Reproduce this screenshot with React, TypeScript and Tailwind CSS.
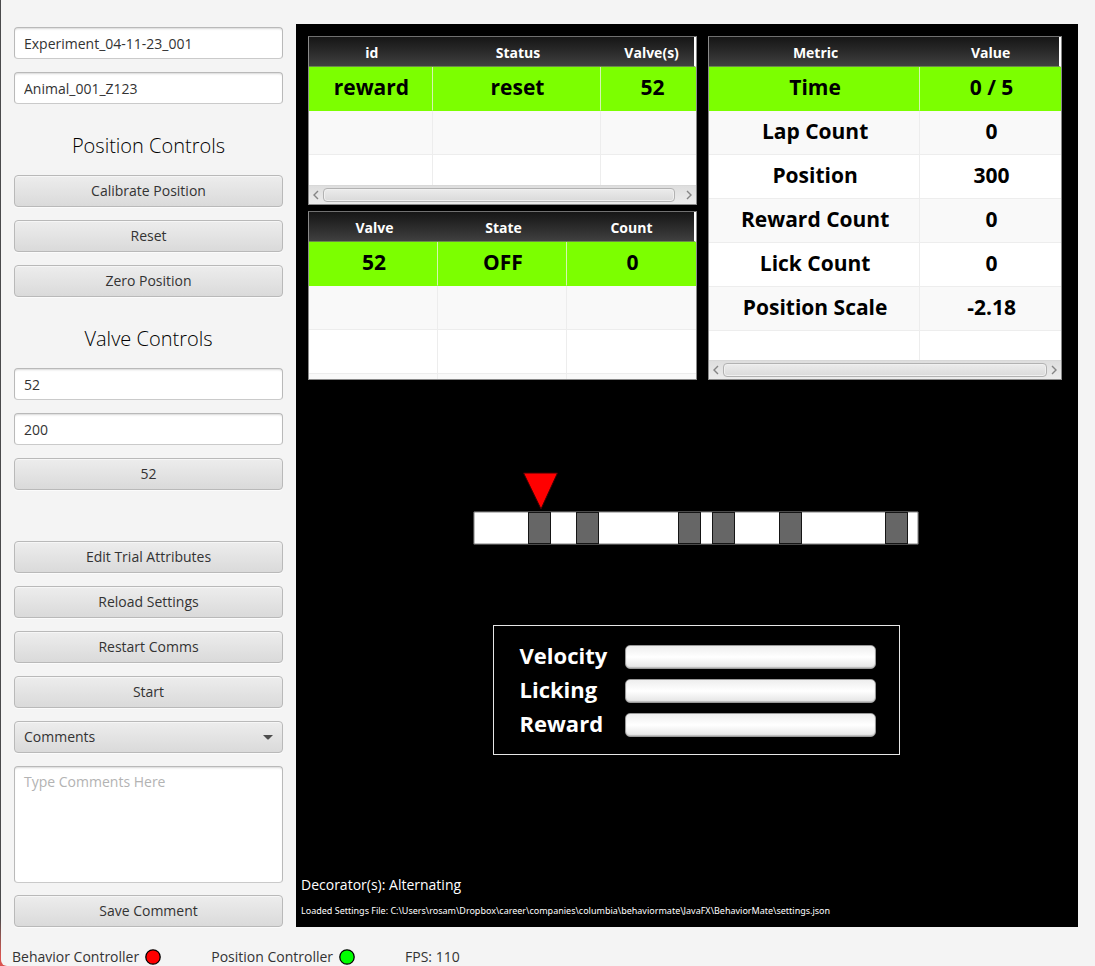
import { useState } from "react";
import type { ReactNode } from "react";

const CONTROL =
  "h-8 w-full shrink-0 rounded border border-[#b9b9b9] text-[14px] leading-5 text-[#333333]";
const BUTTON = `${CONTROL} flex items-center justify-center bg-linear-to-b from-[#ededed] to-[#dadada] pb-px shadow-[inset_0_1px_0_#f6f6f6,0_1px_0_#fbfbfb]`;
const FIELD = `${CONTROL} border-b-[#cacaca] bg-white px-[9px] shadow-[inset_0_2px_2px_-1px_#d8d8d8]`;

function PanelButton({ children }: { children: ReactNode }) {
  return (
    <button type="button" className={BUTTON}>
      {children}
    </button>
  );
}

function TextField({ label, initial }: { label: string; initial: string }) {
  const [value, setValue] = useState(initial);
  return (
    <input
      type="text"
      aria-label={label}
      value={value}
      onChange={(event) => setValue(event.target.value)}
      className={FIELD}
    />
  );
}

function SectionTitle({ children }: { children: ReactNode }) {
  return (
    <h2 className="flex h-[45px] items-end justify-center pb-0.5 text-[20px] leading-7 font-light text-black">
      {children}
    </h2>
  );
}

function ScrollBar({ thumb }: { thumb: string }) {
  return (
    <div className="flex h-[19px] shrink-0 items-center border-t border-[#d8d8d8] bg-linear-to-b from-[#dedede] to-[#ececec] pb-px">
      <button type="button" aria-label="Scroll left" className="flex w-3.5 shrink-0 justify-center">
        <svg width="6" height="10" viewBox="0 0 6 10" fill="none" stroke="#858585" strokeWidth="1.4">
          <path d="M5 1 1 5l4 4" />
        </svg>
      </button>
      <div className="flex-1">
        <div
          className={`h-3.5 rounded border border-[#b2b2b2] bg-linear-to-b from-[#ececec] to-[#dadada] shadow-[inset_0_0_0_1px_#f0f0f0] ${thumb}`}
        />
      </div>
      <button type="button" aria-label="Scroll right" className="flex w-3.5 shrink-0 justify-center">
        <svg width="6" height="10" viewBox="0 0 6 10" fill="none" stroke="#858585" strokeWidth="1.4">
          <path d="m1 1 4 4-4 4" />
        </svg>
      </button>
    </div>
  );
}

interface Column {
  title: string;
  width: string;
  pad: string;
}

interface DataTableProps {
  label: string;
  columns: Column[];
  rows: string[][];
  height: string;
  thumb?: string;
}

function DataTable({ label, columns, rows, height, thumb }: DataTableProps) {
  return (
    <div className={`flex flex-col overflow-hidden border border-[#8a8a8a] border-t-[#707070] bg-white ${height}`}>
      <div className="min-h-0 flex-1 overflow-hidden">
        <table aria-label={label} className="w-full table-fixed border-separate border-spacing-0 text-center">
          <colgroup>
            {columns.map((column) => (
              <col key={column.title} className={column.width} />
            ))}
          </colgroup>
          <thead>
            <tr>
              {columns.map((column) => (
                <th
                  key={column.title}
                  scope="col"
                  className={`h-[30px] border-b border-[#6a8a4a] bg-linear-to-b from-[#161616] to-[#404040] pt-0.5 pr-0 pb-0 text-[14px] leading-5 font-bold text-white last:border-r-2 last:border-r-white ${column.pad}`}
                >
                  {column.title}
                </th>
              ))}
            </tr>
          </thead>
          <tbody>
            {rows.map((cells, row) => (
              <tr key={row} className="bg-white first:bg-[#7cff00] even:bg-[#f9f9f9]">
                {cells.map((cell, index) => (
                  <td
                    key={index}
                    className={`h-11 border-r border-b pt-0 pr-0 pb-1 text-[21px] leading-8 font-bold text-black last:border-r-0 ${columns[index].pad} ${
                      row === 0 ? "border-r-[#d5f5b0] border-b-[#7cff00]" : "border-[#ededed]"
                    }`}
                  >
                    {cell}
                  </td>
                ))}
              </tr>
            ))}
          </tbody>
        </table>
      </div>
      {thumb && <ScrollBar thumb={thumb} />}
    </div>
  );
}

const CUES = [55.5, 103.5, 205.5, 239.5, 306.5, 412.5];

function Track() {
  return (
    <svg width="446" height="73" viewBox="0 0 446 73" role="img" aria-label="Position on track">
      <rect x="0.5" y="39.5" width="445" height="33" rx="1.5" fill="#fff" stroke="#4a4a4a" />
      <rect x="1.5" y="40.5" width="443" height="31" fill="none" stroke="#000" strokeOpacity="0.25" />
      {CUES.map((x) => (
        <rect key={x} x={x} y="40.5" width="22" height="31" fill="#666" stroke="#151515" />
      ))}
      <path d="M50.5 1h34L68 37z" fill="#f00" stroke="#3a0000" />
    </svg>
  );
}

function Gauge({ name }: { name: string }) {
  const id = `gauge-${name.toLowerCase()}`;
  return (
    <div className="flex h-6 items-center">
      <label htmlFor={id} className="w-[105px] pb-1 text-[22px] leading-6 font-bold text-white">
        {name}
      </label>
      <progress
        id={id}
        max={100}
        value={0}
        className="h-6 w-[251px] appearance-none rounded-[5px] border border-[#999] bg-linear-to-b from-[#eeeeee] via-white to-[#e4e4e4] shadow-[inset_0_-1px_1px_#bbb] [&::-webkit-progress-bar]:bg-transparent"
      />
    </div>
  );
}

function StatusLight({ name, color }: { name: string; color: string }) {
  return (
    <div className="flex items-center gap-1.5">
      <span>{name}</span>
      <svg width="16" height="16" viewBox="0 0 16 16" className={color} aria-hidden="true">
        <circle cx="8" cy="8" r="7.2" fill="currentColor" stroke="#000" strokeWidth="1.3" />
      </svg>
    </div>
  );
}

const EVENT_COLUMNS: Column[] = [
  { title: "id", width: "w-[32%]", pad: "pl-0.5" },
  { title: "Status", width: "w-[43.5%]", pad: "pl-0.5" },
  { title: "Valve(s)", width: "w-[24.5%]", pad: "pl-2" },
];
const VALVE_COLUMNS: Column[] = [
  { title: "Valve", width: "w-1/3", pad: "pl-0.5" },
  { title: "State", width: "w-1/3", pad: "pl-0.5" },
  { title: "Count", width: "w-1/3", pad: "pl-0.5" },
];
const METRIC_COLUMNS: Column[] = [
  { title: "Metric", width: "w-[60%]", pad: "pl-0.5" },
  { title: "Value", width: "w-[40%]", pad: "pl-0.5" },
];

export default function App() {
  const [comment, setComment] = useState("");
  return (
    <div className="min-h-screen bg-linear-to-b from-[#4a4a4c] from-95% to-[#d9534f] to-99% pl-px font-['Open_Sans',sans-serif]">
      <div className="flex min-h-screen flex-col rounded-bl-md bg-[#f4f4f4]">
        <div className="flex flex-1 pt-6 pr-[17px]">
          <aside className="flex w-[295px] shrink-0 flex-col gap-[13px] pt-[3px] pr-[13px] pl-[13px]">
            <TextField label="Experiment" initial="Experiment_04-11-23_001" />
            <TextField label="Animal" initial="Animal_001_Z123" />
            <SectionTitle>Position Controls</SectionTitle>
            <PanelButton>Calibrate Position</PanelButton>
            <PanelButton>Reset</PanelButton>
            <PanelButton>Zero Position</PanelButton>
            <SectionTitle>Valve Controls</SectionTitle>
            <TextField label="Valve number" initial="52" />
            <TextField label="Duration" initial="200" />
            <PanelButton>52</PanelButton>
            <div className="mt-[38px] flex flex-col gap-[13px]">
              <PanelButton>Edit Trial Attributes</PanelButton>
              <PanelButton>Reload Settings</PanelButton>
              <PanelButton>Restart Comms</PanelButton>
              <PanelButton>Start</PanelButton>
              <div className="relative">
                <select aria-label="Comments" className={`${BUTTON} appearance-none px-[9px]`}>
                  <option>Comments</option>
                </select>
                <svg
                  width="10"
                  height="5"
                  viewBox="0 0 10 5"
                  className="pointer-events-none absolute top-3.5 right-2.5"
                  aria-hidden="true"
                >
                  <path d="M0 0h10L5.5 4.6h-1z" fill="#4d4d4d" />
                </svg>
              </div>
              <div className="flex flex-col gap-3">
                <textarea
                  aria-label="Comment text"
                  placeholder="Type Comments Here"
                  value={comment}
                  onChange={(event) => setComment(event.target.value)}
                  className="h-[117px] w-full resize-none rounded border border-[#b9b9b9] border-b-[#cacaca] bg-white px-[9px] py-[5px] text-[14px] leading-5 text-[#333333] shadow-[inset_0_2px_2px_-1px_#d8d8d8] placeholder:text-[#b3b3b3]"
                />
                <PanelButton>Save Comment</PanelButton>
              </div>
            </div>
          </aside>

          <main className="flex min-w-0 flex-1 flex-col bg-black text-white">
            <div className="flex gap-[11px] pt-3 pr-4 pl-3">
              <div className="flex min-w-0 flex-[389] flex-col gap-1.5">
                <DataTable
                  label="Contexts"
                  columns={EVENT_COLUMNS}
                  rows={[["reward", "reset", "52"], ["", "", ""], ["", "", ""]]}
                  height="h-[169px]"
                  thumb="w-[98%]"
                />
                <DataTable
                  label="Valves"
                  columns={VALVE_COLUMNS}
                  rows={[["52", "OFF", "0"], ["", "", ""], ["", "", ""], ["", "", ""]]}
                  height="h-[169px]"
                />
              </div>
              <div className="min-w-0 flex-[354]">
                <DataTable
                  label="Metrics"
                  columns={METRIC_COLUMNS}
                  rows={[
                    ["Time", "0 / 5"],
                    ["Lap Count", "0"],
                    ["Position", "300"],
                    ["Reward Count", "0"],
                    ["Lick Count", "0"],
                    ["Position Scale", "-2.18"],
                    ["", ""],
                  ]}
                  height="h-[344px]"
                  thumb="w-full"
                />
              </div>
            </div>

            <div className="flex flex-col items-center gap-20 pt-[92px] pl-[18px]">
              <Track />
              <section
                aria-label="Live readings"
                className="flex flex-col gap-2.5 border border-[#e6e6e6] pt-[19px] pr-[23px] pb-[17px] pl-[26px]"
              >
                <Gauge name="Velocity" />
                <Gauge name="Licking" />
                <Gauge name="Reward" />
              </section>
            </div>

            <footer className="mt-auto px-[5px] pb-2">
              <p className="text-[14px] leading-5">Decorator(s): Alternating</p>
              <p className="mt-2 font-['Noto_Sans',sans-serif] text-[9px] leading-4">
                Loaded Settings File:
                C:\Users\rosam\Dropbox\career\companies\columbia\behaviormate\JavaFX\BehaviorMate\settings.json
              </p>
            </footer>
          </main>
        </div>

        <footer className="flex h-[39px] shrink-0 items-end gap-[50px] pl-[11px] text-[14px] leading-[18px] text-[#333333]">
          <StatusLight name="Behavior Controller" color="text-[#ff0000]" />
          <StatusLight name="Position Controller" color="text-[#00ff00]" />
          <span>FPS: 110</span>
        </footer>
      </div>
    </div>
  );
}
